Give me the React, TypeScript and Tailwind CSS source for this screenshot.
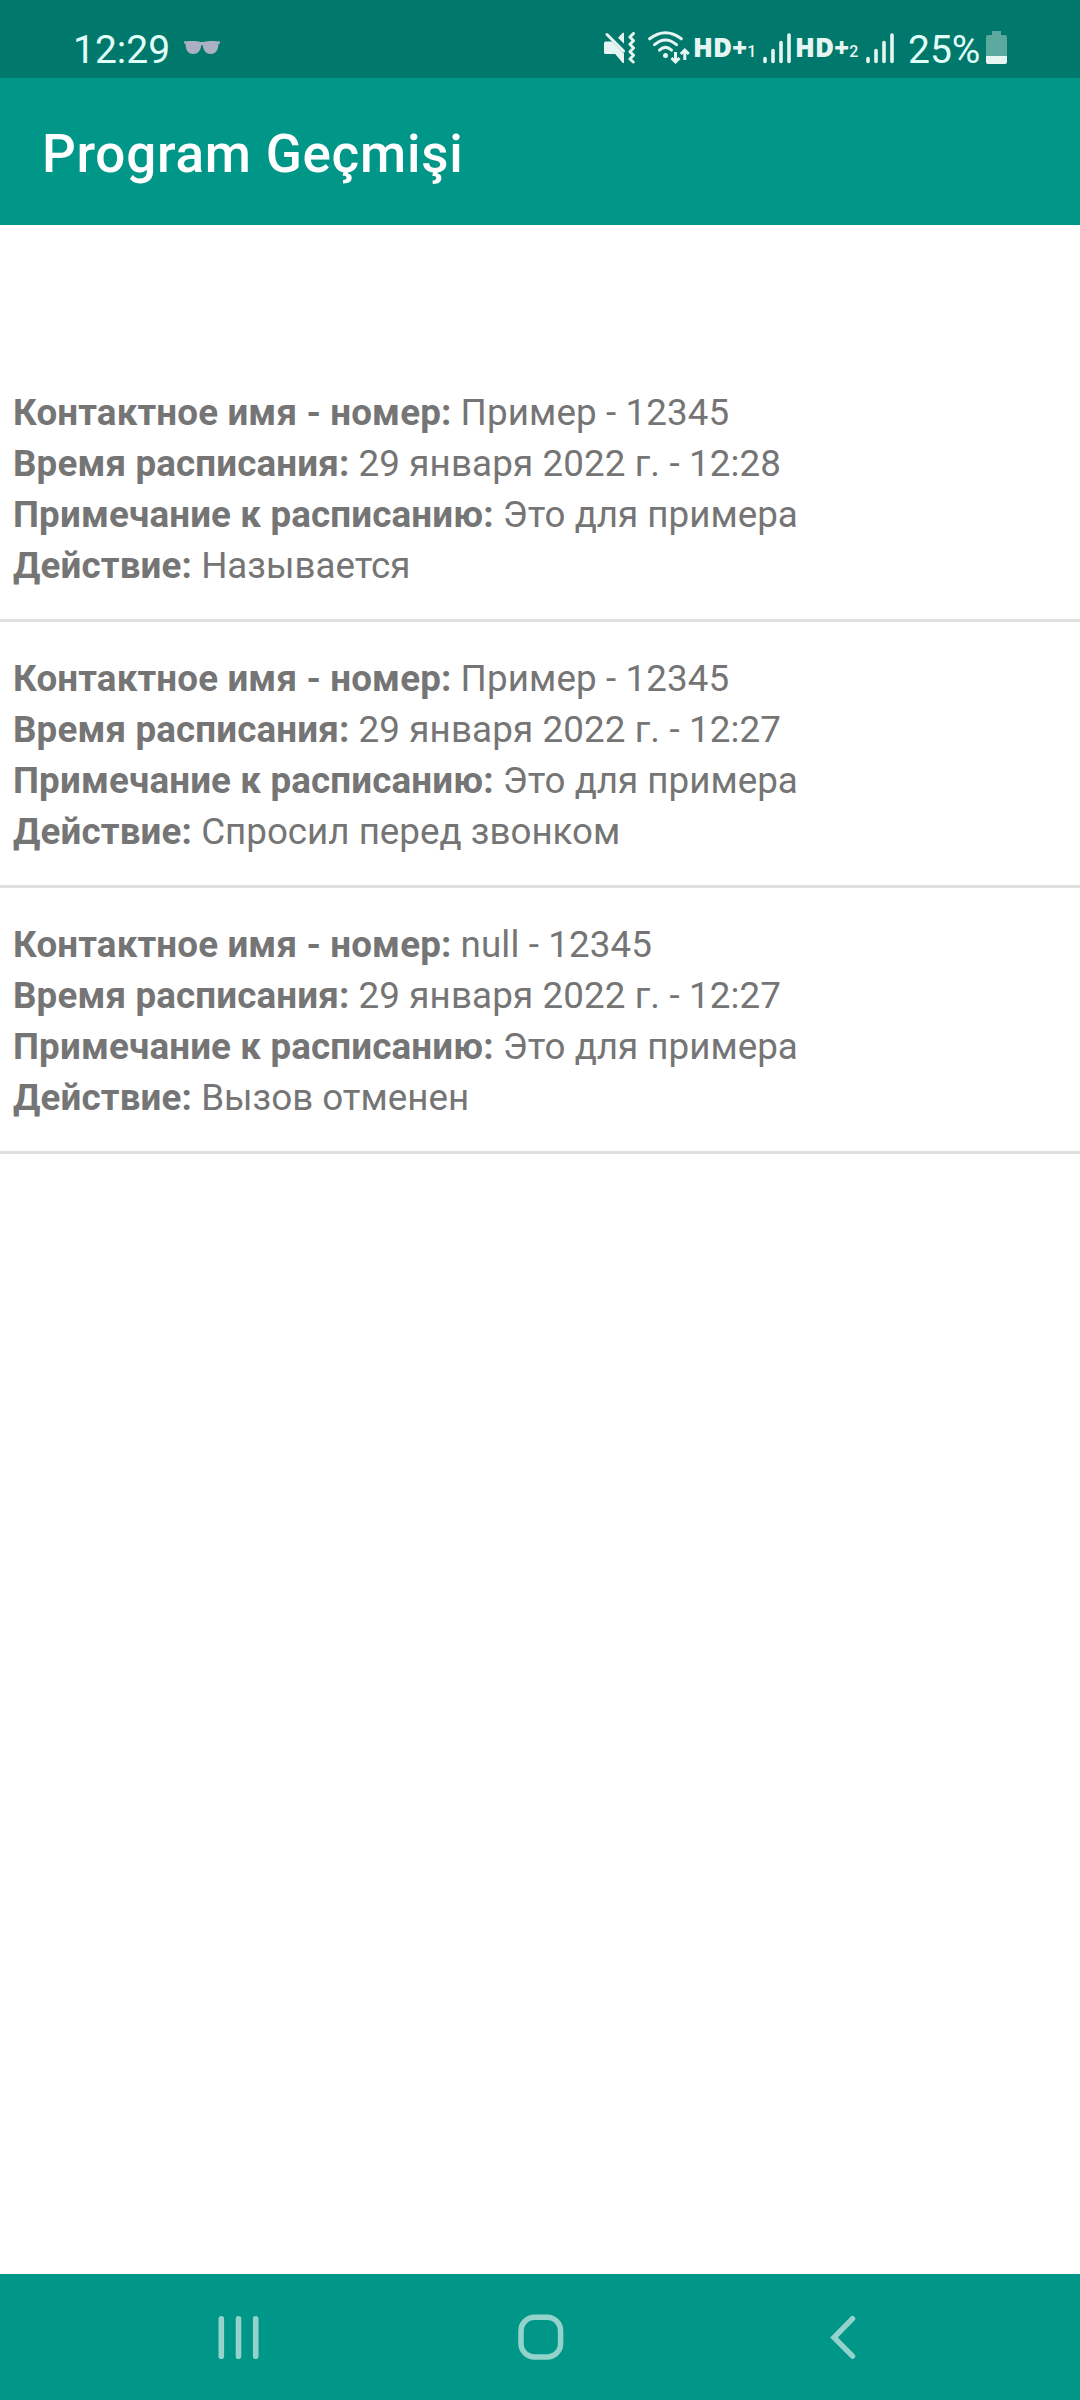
import clsx from "clsx";

type HistoryEntry = {
  id: number;
  contact: string;
  time: string;
  note: string;
  action: string;
};

const history: HistoryEntry[] = [
  {
    id: 1,
    contact: "Пример - 12345",
    time: "29 января 2022 г. - 12:28",
    note: "Это для примера",
    action: "Называется",
  },
  {
    id: 2,
    contact: "Пример - 12345",
    time: "29 января 2022 г. - 12:27",
    note: "Это для примера",
    action: "Спросил перед звонком",
  },
  {
    id: 3,
    contact: "null - 12345",
    time: "29 января 2022 г. - 12:27",
    note: "Это для примера",
    action: "Вызов отменен",
  },
];

const GlassesIcon = () => (
  <svg className="ml-[15px] mt-[41px] h-[14px] w-[36px]" viewBox="0 0 36 14" fill="#abb0c3">
    <path d="M0 .6C5-.1 13-.1 16.500 1h3C23-.1 31-.1 36 .6v1.700l-1.500.8C34.300 9 32 13 27 13c-5 0-7.500-3.500-8.300-8.500-.3-1-1.100-1-1.400 0C16.500 9.500 14 13 9 13 4 13 1.700 9 1.500 3.100L0 2.300z" />
  </svg>
);

const MuteIcon = () => (
  <svg className="mt-[32px] h-[32px] w-[32px]" viewBox="0 0 32 32" fill="#e6f5f2">
    <path d="M1.500 9.500H8l12 12V31h-1.300l-7.500-9H1.500Q0 22 0 20.500V11q0-1.500 1.500-1.500z" />
    <path d="M14 5.700 18.800.8H20v11z" />
    <path
      d="M3 2.500 19.500 19M29.500 1.500l-3.500 3.500 3.500 3.700-3.500 3.600 3.500 3.700-3.500 3.700 3.500 3.600-3.500 3.700 3.200 3"
      fill="none"
      stroke="#e6f5f2"
      strokeWidth="3"
      strokeLinecap="round"
      strokeLinejoin="round"
    />
  </svg>
);

const WifiIcon = () => (
  <svg className="ml-[12px] mt-[31px] h-[34px] w-[42px]" viewBox="0 0 42 34" fill="none" stroke="#e6f5f2">
    <g strokeWidth="3" strokeLinecap="round">
      <path d="M1.700 7.800Q17.500-4.200 33.300 7.800" />
      <path d="M6.500 13.700Q17.500 4.300 28.500 13.700" />
      <path d="M11.500 19.200Q17.500 13.600 23.500 19.200" />
    </g>
    <circle cx="17.500" cy="24.500" r="2.500" fill="#e6f5f2" stroke="none" />
    <g strokeWidth="3">
      <path d="M27.500 21v9M36.800 29v-9" />
      <path d="m23.500 27 4 4 4-4M32.800 23l4-4 4 4" />
    </g>
  </svg>
);

const SignalIcon = () => (
  <svg className="mt-[33px] h-[31px] w-[28px]" viewBox="0 0 28 31" stroke="#e6f5f2" strokeWidth="3.600" strokeLinecap="round">
    <path d="M2 25.500v3M10 17.500v11M18 9.500v19M26 2v26.500" />
  </svg>
);

const BatteryIcon = () => (
  <svg className="ml-[7px] mt-[31px] h-[33px] w-[21px]" viewBox="0 0 21 33">
    <path d="M6 0h9v4h4q2 0 2 2v19H0V6q0-2 2-2h4z" fill="#5aa89e" />
    <path d="M0 25h21v6q0 2-2 2H2q-2 0-2-2z" fill="#e6f5f2" />
  </svg>
);

const HdLabel = ({ sim }: { sim: string }) => (
  <div className="flex w-[66px] items-baseline pt-[33px] leading-[28px] text-[#e6f5f2]">
    <span className="font-['Open_Sans',sans-serif] text-[26px] font-extrabold">HD+</span>
    <span className="text-[16px] font-medium">{sim}</span>
  </div>
);

const StatusBar = () => (
  <div className="flex h-[78px] items-start bg-[#00786b] pl-[73px]">
    <span className="w-[96px] whitespace-nowrap pt-[27px] text-[39px] leading-[46px] text-[#e0fff9]">12:29</span>
    <GlassesIcon />
    <div className="ml-auto flex items-start pr-[73px]">
      <MuteIcon />
      <WifiIcon />
      <div className="ml-[3px]">
        <HdLabel sim="1" />
      </div>
      <div className="ml-[4px]">
        <SignalIcon />
      </div>
      <div className="ml-[4px]">
        <HdLabel sim="2" />
      </div>
      <div className="ml-[5px]">
        <SignalIcon />
      </div>
      <span className="ml-[14px] w-[71px] whitespace-nowrap pt-[27px] text-[39px] leading-[46px] text-[#e0fff9]">25%</span>
      <BatteryIcon />
    </div>
  </div>
);

type FieldProps = {
  label: string;
  value: string;
  numeric?: boolean;
};

const Field = ({ label, value, numeric }: FieldProps) => (
  <p>
    <b className="font-bold tracking-[0.14px]">{label}:</b>{" "}
    <span className={clsx(numeric && "tracking-[0.12px]")}>{value}</span>
  </p>
);

const HistoryItem = ({ entry }: { entry: HistoryEntry }) => (
  <li className="border-b-3 border-[#e0e0e0] pb-[28px] pl-[13px] pt-[31px] text-[36.75px] leading-[51px] text-[#757575]">
    <Field label="Контактное имя - номер" value={entry.contact} numeric />
    <Field label="Время расписания" value={entry.time} numeric />
    <Field label="Примечание к расписанию" value={entry.note} />
    <Field label="Действие" value={entry.action} />
  </li>
);

const NavigationBar = () => (
  <nav className="flex h-[126px] items-start bg-[#009688] pl-[218px] pt-[40px] text-[#93d3cc]">
    <svg className="h-[46px] w-[41px]" viewBox="0 0 41 46" stroke="currentColor" strokeWidth="5.600" strokeLinecap="round">
      <path d="M3.300 4.800v37.400M20.500 4.800v37.400M37.700 4.800v37.400" />
    </svg>
    <svg className="ml-[259px] h-[46px] w-[46px]" viewBox="0 0 46 46" fill="none" stroke="currentColor" strokeWidth="5.500">
      <rect x="3" y="3.300" width="39.600" height="39.600" rx="13.500" />
    </svg>
    <svg className="ml-[266px] h-[46px] w-[26px]" viewBox="0 0 26 46" fill="none" stroke="currentColor" strokeWidth="5.400" strokeLinecap="round">
      <path d="M22.500 4.700 4 23.500l18.500 18.700" />
    </svg>
  </nav>
);

export default function App() {
  return (
    <div className="flex h-[2400px] w-[1080px] flex-col bg-white font-[Roboto,sans-serif]">
      <StatusBar />
      <header className="flex h-[147px] items-center bg-[#009688] pl-[42px] pt-[6px]">
        <h1 className="text-[53px] font-medium tracking-[0.014em] text-white">Program Geçmişi</h1>
      </header>
      <main className="flex-1 pt-[131px]">
        <ul>
          {history.map((entry) => (
            <HistoryItem key={entry.id} entry={entry} />
          ))}
        </ul>
      </main>
      <NavigationBar />
    </div>
  );
}
